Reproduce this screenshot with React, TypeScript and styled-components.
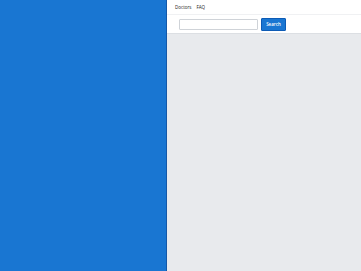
import React from "react";
import styled, { createGlobalStyle } from "styled-components";

const Global = createGlobalStyle`
  html, body { margin: 0; padding: 0; height: 100%; }
  body { font-family: "Open Sans", "Liberation Sans", sans-serif; }
  #root { height: 100%; }
`;

const Page = styled.div`
  display: flex;
  width: 361px;
  height: 271px;
  overflow: hidden;
`;

const Side = styled.div`
  width: 166px;
  flex: none;
  background: #1976d2;
  border-right: 1px solid #1458a8;
`;

const Main = styled.div`
  flex: 1;
  display: flex;
  flex-direction: column;
  background: #e8eaed;
`;

const Nav = styled.nav`
  display: flex;
  align-items: center;
  gap: 5px;
  height: 14px;
  padding-left: 8px;
  background: #fff;
  border-bottom: 1px solid #f0f1f3;
`;

const NavLink = styled.a`
  font-size: 4.5px;
  color: #222;
  text-decoration: none;
`;

const SearchBar = styled.div`
  display: flex;
  align-items: center;
  gap: 3px;
  height: 18px;
  padding-left: 12px;
  background: #fff;
  border-bottom: 1px solid #dcdfe3;
`;

const Input = styled.input`
  box-sizing: border-box;
  width: 79px;
  height: 11px;
  border: 1px solid #cfd3d8;
  border-radius: 1px;
  padding: 0;
  outline: none;
`;

const Button = styled.button`
  box-sizing: border-box;
  width: 25px;
  height: 13px;
  border: 1px solid #0d5bb5;
  border-radius: 1px;
  background: #1976d2;
  color: #fff;
  font-family: inherit;
  font-size: 4.5px;
  font-weight: 600;
  padding: 0;
`;

export default function App() {
  return (
    <>
      <Global />
      <Page>
        <Side />
        <Main>
          <Nav>
            <NavLink>Doctors</NavLink>
            <NavLink>FAQ</NavLink>
          </Nav>
          <SearchBar>
            <Input />
            <Button>Search</Button>
          </SearchBar>
        </Main>
      </Page>
    </>
  );
}
